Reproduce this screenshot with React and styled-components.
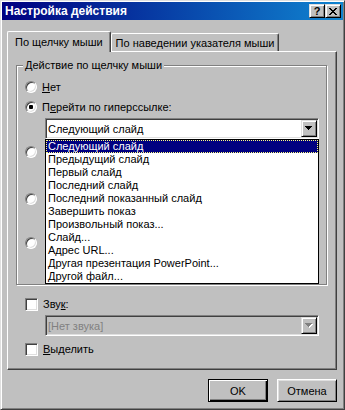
import React from 'react';
import styled, { createGlobalStyle, css } from 'styled-components';

const Global = createGlobalStyle`
  html, body { margin: 0; padding: 0; background: #c0c0c0; }
  body {
    font-family: "Liberation Sans", Arial, sans-serif;
    font-size: 11px;
    color: #000;
  }
  #root { width: 345px; height: 410px; }
  u { text-decoration-thickness: 1px; text-underline-offset: 1px; }
`;

const pixels = (rows) =>
  rows
    .flatMap((r, y) => [...r].map((c, x) => (c === '#' ? `M${x} ${y}h1v1h-1z` : '')))
    .join('');

const CLOSE = pixels([
  '##....##',
  '.##..##.',
  '..####..',
  '...##...',
  '..####..',
  '.##..##.',
  '##....##',
]);

const ARROW = pixels(['#######', '.#####.', '..###..', '...#...']);

const Window = styled.div`
  box-sizing: border-box;
  width: 345px;
  height: 410px;
  background: #c0c0c0;
  border: 1px solid;
  border-color: #dfdfdf #404040 #404040 #dfdfdf;
  box-shadow: inset 1px 1px #fff, inset -1px -1px #808080;
  padding: 1px;
  display: flex;
  flex-direction: column;
`;

const TitleBar = styled.div`
  flex: none;
  height: 18px;
  display: flex;
  align-items: center;
  padding: 0 2px 0 3px;
  background: linear-gradient(to right, #000080, #1084d0);
`;

const Title = styled.span`
  flex: 1;
  color: #fff;
  font-weight: bold;
  font-size: 12px;
  white-space: nowrap;
`;

const CapButton = styled.div`
  box-sizing: border-box;
  width: 16px;
  height: 14px;
  display: flex;
  align-items: center;
  justify-content: center;
  background: #c0c0c0;
  border: 1px solid;
  border-color: #dfdfdf #000 #000 #dfdfdf;
  box-shadow: inset 1px 1px #fff, inset -1px -1px #808080;
  font-weight: bold;
  font-size: 11px;
  line-height: 12px;
  color: #000;
`;

const Body = styled.div`
  flex: 1;
  display: flex;
  flex-direction: column;
  padding: 11px 6px 6px 5px;
  min-height: 0;
`;

const TabStrip = styled.div`
  display: flex;
  align-items: flex-end;
  height: 20px;
`;

const Tab = styled.div`
  box-sizing: border-box;
  position: relative;
  height: ${(p) => (p.$active ? '21px' : '18px')};
  margin-bottom: ${(p) => (p.$active ? '-1px' : '0')};
  z-index: ${(p) => (p.$active ? 2 : 0)};
  padding: ${(p) => (p.$active ? '0 7px' : '1px 4px 0')};
  display: flex;
  align-items: center;
  white-space: nowrap;
  background: #c0c0c0;
  border-top: 1px solid #fff;
  border-left: 1px solid #fff;
  border-right: 1px solid #404040;
  border-radius: 2px 2px 0 0;
  box-shadow: inset -1px 0 #808080;
`;

const Panel = styled.div`
  flex: 1;
  display: flex;
  flex-direction: column;
  border: 1px solid;
  border-color: #fff #404040 #404040 #fff;
  box-shadow: inset -1px -1px #808080;
  padding-top: 7px;
`;

const Group = styled.fieldset`
  margin: 0 9px 0 8px;
  padding: 5px 7px 9px 8px;
  min-width: 0;
  border: 1px solid #808080;
  box-shadow: inset 1px 1px #fff, 1px 1px #fff;
`;

const Legend = styled.legend`
  margin-left: -2px;
  padding: 0 2px;
  line-height: 13px;
  background: #c0c0c0;
`;

const Row = styled.div`
  height: 20px;
  display: flex;
  align-items: center;
  gap: 5px;
  white-space: nowrap;
  margin-top: ${(p) => p.$mt || '0'};
`;

const Radio = styled.span`
  box-sizing: border-box;
  flex: none;
  width: 12px;
  height: 12px;
  border-radius: 50%;
  background: #fff;
  border: 1px solid;
  border-color: #808080 #fff #fff #808080;
  box-shadow: inset 1px 1px #404040, inset -1px -1px #dfdfdf;
  display: flex;
  align-items: center;
  justify-content: center;
  &::after {
    content: '';
    display: ${(p) => (p.$checked ? 'block' : 'none')};
    width: 4px;
    height: 4px;
    border-radius: 1px;
    background: #000;
  }
`;

const Check = styled.span`
  box-sizing: border-box;
  flex: none;
  width: 13px;
  height: 13px;
  background: #fff;
  border: 1px solid;
  border-color: #808080 #fff #fff #808080;
  box-shadow: inset 1px 1px #404040, inset -1px -1px #dfdfdf;
`;

const ComboWrap = styled.div`
  position: relative;
  margin-left: 20px;
  margin-top: ${(p) => p.$mt || '0'};
`;

const Sunken = css`
  box-sizing: border-box;
  height: 21px;
  border: 1px solid;
  border-color: #808080 #fff #fff #808080;
  box-shadow: inset 1px 1px #404040, inset -1px -1px #dfdfdf;
  padding: 1px;
`;

const Combo = styled.div`
  ${Sunken};
  display: flex;
  align-items: stretch;
  background: ${(p) => (p.$disabled ? '#c0c0c0' : '#fff')};
  color: ${(p) => (p.$disabled ? '#808080' : '#000')};
`;

const ComboText = styled.span`
  flex: 1;
  display: flex;
  align-items: center;
  padding-left: 1px;
  white-space: nowrap;
`;

const DropButton = styled.span`
  box-sizing: border-box;
  width: 16px;
  display: flex;
  align-items: center;
  justify-content: center;
  background: #c0c0c0;
  border: 1px solid;
  border-color: #dfdfdf #000 #000 #dfdfdf;
  box-shadow: inset 1px 1px #fff, inset -1px -1px #808080;
`;

const DropList = styled.div`
  position: absolute;
  left: 0;
  right: 0;
  top: 100%;
  z-index: 5;
  background: #fff;
  border: 1px solid #000;
`;

const Item = styled.div`
  height: 13px;
  line-height: 13px;
  padding-left: 2px;
  white-space: nowrap;
  ${(p) =>
    p.$selected &&
    css`
      background: #000080;
      color: #fff;
      outline: 1px dotted #ffff80;
      outline-offset: -1px;
    `}
`;

const FieldRow = styled.div`
  display: flex;
  gap: 6px;
  margin-left: 20px;
  margin-top: 1px;
`;

const TextBox = styled.div`
  ${Sunken};
  flex: 1;
  background: #fff;
`;

const Options = styled.div`
  display: flex;
  flex-direction: column;
  padding: 0 17px;
`;

const Footer = styled.div`
  flex: none;
  display: flex;
  justify-content: flex-end;
  gap: 9px;
  margin-top: 9px;
`;

const Button = styled.div`
  box-sizing: border-box;
  width: 60px;
  height: 23px;
  display: flex;
  align-items: center;
  justify-content: center;
  background: #c0c0c0;
  border: 1px solid;
  ${(p) =>
    p.$default
      ? css`
          border-color: #000;
          box-shadow: inset 1px 1px #fff, inset -1px -1px #000, inset -2px -2px #808080;
        `
      : css`
          border-color: #fff #000 #000 #fff;
          box-shadow: inset 1px 1px #dfdfdf, inset -1px -1px #808080;
        `}
`;

const Arrow = ({ disabled }) => (
  <svg width="8" height="5" viewBox="0 0 8 5" shapeRendering="crispEdges">
    {disabled && <path d={ARROW} fill="#fff" transform="translate(1 1)" />}
    <path d={ARROW} fill={disabled ? '#808080' : '#000'} />
  </svg>
);

const ITEMS = [
  'Следующий слайд',
  'Предыдущий слайд',
  'Первый слайд',
  'Последний слайд',
  'Последний показанный слайд',
  'Завершить показ',
  'Произвольный показ...',
  'Слайд...',
  'Адрес URL...',
  'Другая презентация PowerPoint...',
  'Другой файл...',
];

export default function App() {
  return (
    <>
      <Global />
      <Window>
        <TitleBar>
          <Title>Настройка действия</Title>
          <CapButton>?</CapButton>
          <CapButton>
            <svg width="8" height="7" viewBox="0 0 8 7" shapeRendering="crispEdges">
              <path d={CLOSE} fill="#000" />
            </svg>
          </CapButton>
        </TitleBar>
        <Body>
          <TabStrip>
            <Tab $active>По щелчку мыши</Tab>
            <Tab>По наведении указателя мыши</Tab>
          </TabStrip>
          <Panel>
            <Group>
              <Legend>Действие по щелчку мыши</Legend>
              <Row>
                <Radio />
                <span>
                  <u>Н</u>ет
                </span>
              </Row>
              <Row>
                <Radio $checked />
                <span>
                  П<u>е</u>рейти по гиперссылке:
                </span>
              </Row>
              <ComboWrap $mt="1px">
                <Combo>
                  <ComboText>Следующий слайд</ComboText>
                  <DropButton>
                    <Arrow />
                  </DropButton>
                </Combo>
                <DropList>
                  {ITEMS.map((t, i) => (
                    <Item key={t} $selected={i === 0}>
                      {t}
                    </Item>
                  ))}
                </DropList>
              </ComboWrap>
              <Row $mt="3px">
                <Radio />
              </Row>
              <FieldRow>
                <TextBox />
              </FieldRow>
              <Row $mt="5px">
                <Radio />
              </Row>
              <FieldRow>
                <TextBox />
              </FieldRow>
              <Row $mt="2px">
                <Radio />
              </Row>
              <FieldRow>
                <TextBox />
              </FieldRow>
            </Group>
            <Options>
              <Row $mt="9px">
                <Check />
                <span>
                  Зву<u>к</u>:
                </span>
              </Row>
              <ComboWrap $mt="1px">
                <Combo $disabled>
                  <ComboText>[Нет звука]</ComboText>
                  <DropButton>
                    <Arrow disabled />
                  </DropButton>
                </Combo>
              </ComboWrap>
              <Row $mt="3px">
                <Check />
                <span>
                  <u>В</u>ыделить
                </span>
              </Row>
            </Options>
          </Panel>
          <Footer>
            <Button $default>OK</Button>
            <Button>Отмена</Button>
          </Footer>
        </Body>
      </Window>
    </>
  );
}
